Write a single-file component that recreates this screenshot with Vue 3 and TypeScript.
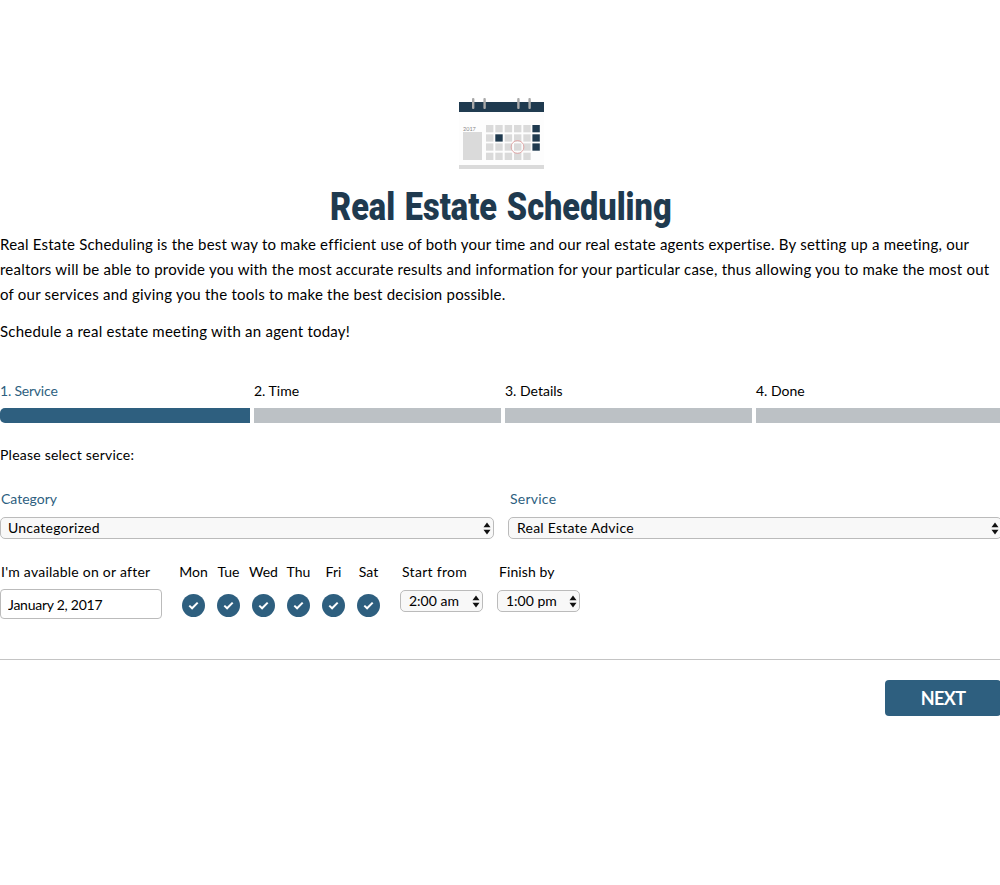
<script setup lang="ts">
const steps = ['1. Service', '2. Time', '3. Details', '4. Done']
const days = ['Mon', 'Tue', 'Wed', 'Thu', 'Fri', 'Sat']

const colX = [486, 495.3, 504.7, 514, 523.3, 532.4]
const rowY = [125, 134.3, 143.4, 152.7]
const cells: { x: number; y: number; dark: boolean }[] = []
rowY.forEach((y, r) => {
  colX.forEach((x, c) => {
    if (r === 3 && c === 5) return
    cells.push({ x: x - 459, y: y - 97, dark: (c === 5 && r < 3) || (c === 1 && r === 1) })
  })
})
</script>

<template>
  <div class="page">
    <div class="logo">
      <svg width="85" height="73" viewBox="0 0 85 73">
        <rect x="0" y="5" width="85" height="10" fill="#1f3a4f" />
        <rect x="0" y="15" width="85" height="53" fill="#fdfdfd" />
        <g fill="#a9a9a9">
          <rect x="13" y="1" width="2.4" height="11" rx="1" />
          <rect x="24.4" y="1" width="2.4" height="11" rx="1" />
          <rect x="58.2" y="1" width="2.4" height="11" rx="1" />
          <rect x="69.4" y="1" width="2.4" height="11" rx="1" />
        </g>
        <text x="4" y="33.5" class="year">2017</text>
        <rect x="4" y="35" width="19" height="28" fill="#dadada" />
        <rect
          v-for="(c, i) in cells"
          :key="i"
          :x="c.x"
          :y="c.y"
          width="7.4"
          height="7.3"
          :fill="c.dark ? '#1f3a4f' : '#dadada'"
        />
        <circle cx="58.5" cy="50" r="6.4" fill="none" stroke="#dfa3a3" stroke-width="0.9" />
        <rect x="0" y="68" width="85" height="4" fill="#dadada" />
      </svg>
    </div>

    <h1><span>Real Estate Scheduling</span></h1>

    <p class="intro">
      Real Estate Scheduling is the best way to make efficient use of both your time and our real estate agents expertise. By setting up a meeting, our realtors will be able to provide you with the most accurate results and information for your particular case, thus allowing you to make the most out of our services and giving you the tools to make the best decision possible.
    </p>
    <p class="cta">Schedule a real estate meeting with an agent today!</p>

    <div class="steps">
      <div v-for="(s, i) in steps" :key="s" class="step" :class="{ active: i === 0 }">
        <span class="step-label">{{ s }}</span>
        <div class="step-bar"></div>
      </div>
    </div>

    <div class="please">Please select service:</div>

    <div class="selects">
      <div class="field">
        <label>Category</label>
        <div class="select-wrap">
          <select class="big"><option>Uncategorized</option></select>
          <svg class="arrows" width="8" height="13" viewBox="0 0 8 13"><path d="M4 0.5 7.5 5.2H.5zM4 12.5 .5 7.8h7z" /></svg>
        </div>
      </div>
      <div class="field service">
        <label>Service</label>
        <div class="select-wrap">
          <select class="big"><option>Real Estate Advice</option></select>
          <svg class="arrows" width="8" height="13" viewBox="0 0 8 13"><path d="M4 0.5 7.5 5.2H.5zM4 12.5 .5 7.8h7z" /></svg>
        </div>
      </div>
    </div>

    <div class="avail">
      <div class="date-col">
        <div class="col-label">I'm available on or after</div>
        <input class="date" type="text" value="January 2, 2017" />
      </div>
      <div class="days">
        <div v-for="d in days" :key="d" class="day">
          <div class="col-label">{{ d }}</div>
          <span class="check">
            <svg width="11" height="9" viewBox="0 0 11 9"><path d="M1.3 4.6 4.1 7.3 9.7 1.6" fill="none" stroke="#fff" stroke-width="2" /></svg>
          </span>
        </div>
      </div>
      <div class="time-col start">
        <div class="col-label">Start from</div>
        <div class="select-wrap">
          <select class="small"><option>2:00 am</option></select>
          <svg class="arrows" width="8" height="13" viewBox="0 0 8 13"><path d="M4 0.5 7.5 5.2H.5zM4 12.5 .5 7.8h7z" /></svg>
        </div>
      </div>
      <div class="time-col finish">
        <div class="col-label">Finish by</div>
        <div class="select-wrap">
          <select class="small"><option>1:00 pm</option></select>
          <svg class="arrows" width="8" height="13" viewBox="0 0 8 13"><path d="M4 0.5 7.5 5.2H.5zM4 12.5 .5 7.8h7z" /></svg>
        </div>
      </div>
    </div>

    <div class="footer">
      <button class="next">NEXT</button>
    </div>
  </div>
</template>

<style scoped>
.page {
  width: 1000px;
  height: 885px;
  overflow: hidden;
  padding-top: 97px;
  box-sizing: border-box;
  font-family: "Lato", "Noto Sans", sans-serif;
  font-size: 15px;
  color: #000;
  background: #fff;
}

.logo {
  display: flex;
  justify-content: center;
  padding-left: 3px;
  height: 73px;
}

.year {
  font-size: 5.5px;
  fill: #888;
  font-family: "Lato", sans-serif;
}

h1 {
  margin: 14px 0 0;
  text-align: center;
  font-family: "Roboto", sans-serif;
  font-weight: 900;
  font-size: 38px;
  line-height: 44px;
  word-spacing: 2px;
  color: #1f3a4f;
}

h1 span {
  display: inline-block;
  transform: translate(1px, 1px) scaleX(0.855);
}

.intro {
  margin: 4px 0 0;
  line-height: 25px;
  width: 1000px;
  letter-spacing: 0.22px;
}

.cta {
  margin: 12px 0 0;
  line-height: 25px;
  letter-spacing: 0.23px;
}

.steps {
  display: grid;
  grid-template-columns: 250px 247px 247px 244px;
  column-gap: 4px;
  margin-top: 37px;
}

.step-label {
  display: block;
  line-height: 20px;
  font-size: 14px;
}

.step-bar {
  height: 15px;
  margin-top: 7px;
  background: #bcc1c5;
}

.step.active .step-label {
  color: #2e5f7f;
  letter-spacing: -0.2px;
}

.step.active .step-bar {
  background: #2e5f7f;
  border-radius: 5px 0 0 5px;
}

.please {
  margin-top: 22px;
  line-height: 20px;
  font-size: 14px;
  letter-spacing: 0.23px;
}

.selects {
  display: flex;
  gap: 14px;
  margin-top: 24px;
  width: 1002px;
}

.field {
  width: 494px;
}

.field label {
  display: block;
  padding-left: 1px;
  line-height: 20px;
  font-size: 14px;
  color: #2e5f7f;
}

.field.service label {
  padding-left: 2px;
  letter-spacing: 0.25px;
}

.select-wrap {
  position: relative;
}

select {
  appearance: none;
  display: block;
  width: 100%;
  box-sizing: border-box;
  margin: 0;
  border: 1px solid #bbb;
  border-radius: 5px;
  background: #f8f8f8;
  color: #000;
  font-family: inherit;
  font-size: 14px;
  line-height: 18px;
}

select.big {
  height: 22px;
  padding: 0 0 1px 7px;
  margin-top: 8px;
  letter-spacing: 0.23px;
}

.field.service select.big {
  padding-left: 8px;
}

select.small {
  height: 22px;
  padding: 0 0 1px 8px;
}

.arrows {
  position: absolute;
  right: 3px;
  bottom: 4px;
  fill: #111;
}

.avail {
  display: flex;
  margin-top: 23px;
  height: 60px;
}

.col-label {
  line-height: 20px;
  font-size: 14px;
}

.date-col {
  width: 162px;
}

.date-col .col-label {
  padding-left: 1px;
  letter-spacing: 0.24px;
}

.date {
  display: block;
  width: 162px;
  height: 30px;
  box-sizing: border-box;
  margin-top: 7px;
  padding: 0 6px 0 7px;
  border: 1px solid #bbb;
  border-radius: 4px;
  font-family: inherit;
  font-size: 14px;
  letter-spacing: -0.25px;
  color: #000;
}

.days {
  display: flex;
  margin-left: 14px;
}

.day {
  width: 35px;
  display: flex;
  flex-direction: column;
  align-items: center;
}

.check {
  display: flex;
  align-items: center;
  justify-content: center;
  width: 23px;
  height: 23px;
  margin-top: 12px;
  border-radius: 50%;
  background: #2e5f7f;
}

.time-col .select-wrap {
  margin-top: 8px;
  width: 83px;
}

.time-col.start {
  margin-left: 14px;
}

.time-col.finish {
  margin-left: 14px;
}

.time-col .col-label {
  padding-left: 2px;
  letter-spacing: 0.1px;
}

.time-col.start .col-label {
  letter-spacing: 0.3px;
}

.footer {
  margin-top: 37px;
  border-top: 1px solid #c4c4c4;
  padding-top: 20px;
  display: flex;
  justify-content: flex-end;
}

.next {
  width: 116px;
  height: 36px;
  margin-right: -1px;
  padding: 0;
  border: none;
  border-radius: 4px;
  background: #2e5f7f;
  color: #fff;
  font-family: inherit;
  font-size: 18px;
  font-weight: 700;
  letter-spacing: -0.6px;
}
</style>
